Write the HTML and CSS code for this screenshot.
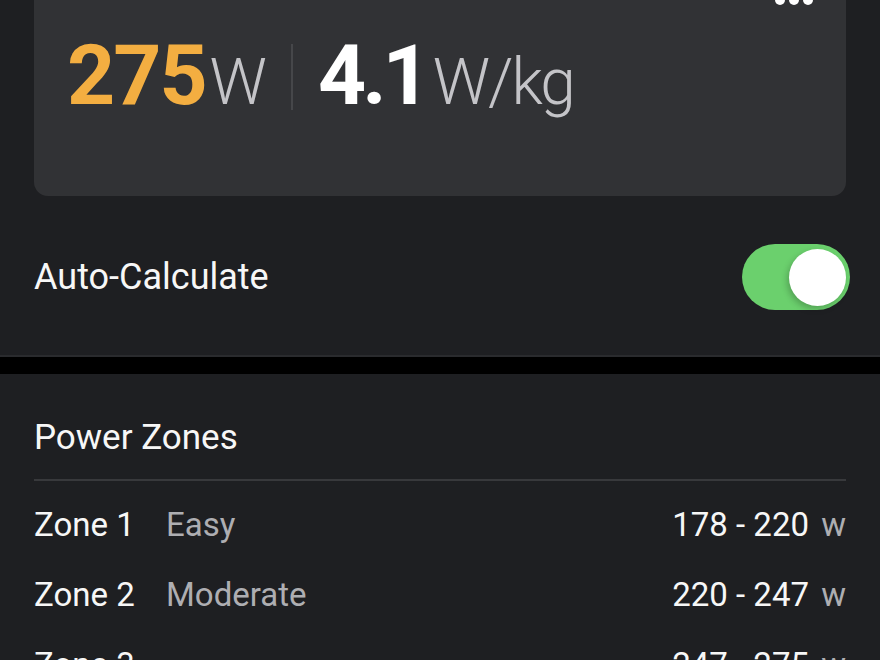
FILE: index.html
```html
<!DOCTYPE html>
<html lang="en">
<head>
<meta charset="utf-8">
<title>Power</title>
<link rel="stylesheet" href="styles.css">
</head>
<body>
<main class="page">
  <section class="top">
    <div class="card">
      <div class="card-head">
        <span class="dots"><i></i><i></i><i></i></span>
      </div>
      <div class="metrics">
        <div class="metric"><span class="num orange">275</span><span class="unit">W</span></div>
        <span class="sep"></span>
        <div class="metric"><span class="num num-tight">4.1</span><span class="unit unit-tight">W/kg</span></div>
      </div>
    </div>
    <div class="setting">
      <span class="setting-label">Auto-Calculate</span>
      <span class="toggle"><span class="knob"></span></span>
    </div>
  </section>
  <div class="band"></div>
  <section class="zones">
    <h2 class="zones-title">Power Zones</h2>
    <div class="zones-rule"></div>
    <div class="zone">
      <span class="zone-name">Zone 1</span>
      <span class="zone-desc">Easy</span>
      <span class="zone-range">178 - 220 <span class="zone-unit">w</span></span>
    </div>
    <div class="zone">
      <span class="zone-name">Zone 2</span>
      <span class="zone-desc">Moderate</span>
      <span class="zone-range">220 - 247 <span class="zone-unit">w</span></span>
    </div>
    <div class="zone">
      <span class="zone-name">Zone 3</span>
      <span class="zone-desc"></span>
      <span class="zone-range">247 - 275 <span class="zone-unit">w</span></span>
    </div>
  </section>
</main>
</body>
</html>
```
FILE: styles.css
```css
html, body {
  margin: 0;
  padding: 0;
  background: #1e1f22;
  overflow: hidden;
}
body {
  font-family: Roboto, "Liberation Sans", sans-serif;
  color: #f7f7f7;
}
.page {
  width: 880px;
}
.top {
  padding: 0 34px 45px;
  border-bottom: 2px solid #2a2b2e;
}
.card {
  margin-top: -30px;
  background: #313235;
  border-radius: 14px;
  padding: 25px 33px 75px 33px;
}
.card-head {
  display: flex;
  justify-content: flex-end;
  height: 10px;
}
.dots {
  display: flex;
  gap: 4px;
}
.dots i {
  display: block;
  width: 10px;
  height: 10px;
  border-radius: 50%;
  background: #ffffff;
}
.metrics {
  margin-top: 32px;
  display: flex;
  align-items: center;
  height: 84px;
}
.metric {
  font-size: 84px;
  line-height: 84px;
  white-space: nowrap;
}
.num {
  font-weight: 700;
  letter-spacing: -2px;
  color: #ffffff;
}
.num.orange {
  color: #f3ae41;
}
.num-tight {
  letter-spacing: -4px;
}
.unit {
  font-size: 64px;
  font-weight: 300;
  color: #c4c4c8;
  margin-left: 4px;
}
.unit-tight {
  letter-spacing: -2px;
  margin-left: 6px;
}
.sep {
  width: 2px;
  height: 66px;
  background: #46474a;
  margin: 0 25px 4px 24px;
}
.setting {
  margin-top: 48px;
  display: flex;
  align-items: center;
  justify-content: space-between;
}
.setting-label {
  font-size: 36px;
  line-height: 40px;
}
.toggle {
  display: flex;
  align-items: center;
  justify-content: flex-end;
  width: 108px;
  height: 66px;
  box-sizing: border-box;
  padding: 0 4px;
  border-radius: 33px;
  background: #6bd06d;
  margin-right: -4px;
}
.knob {
  display: block;
  width: 57px;
  height: 57px;
  border-radius: 50%;
  background: #ffffff;
  box-shadow: -2px 3px 6px rgba(0, 0, 0, 0.22);
}
.band {
  height: 17px;
  background: #000000;
}
.zones {
  padding: 44px 34px 0;
}
.zones-title {
  margin: 0;
  font-size: 35px;
  line-height: 40px;
  font-weight: 400;
}
.zones-rule {
  margin-top: 21px;
  height: 2px;
  background: #38393c;
  margin-bottom: 9px;
}
.zone {
  display: grid;
  grid-template-columns: 132px 1fr auto;
  align-items: baseline;
  height: 70px;
  line-height: 70px;
  font-size: 33px;
}
.zone-desc {
  color: #aeaeb2;
}
.zone-range {
  white-space: nowrap;
}
.zone-unit {
  color: #aeaeb2;
  margin-left: 4px;
}
```
